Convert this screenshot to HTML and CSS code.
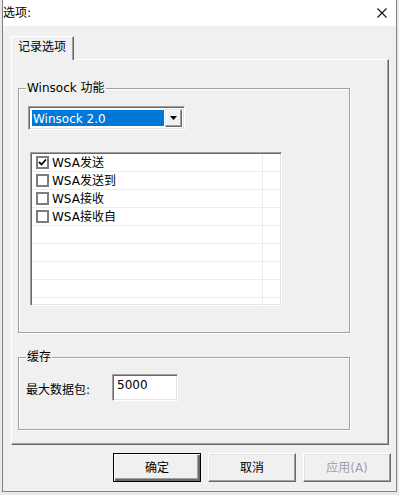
FILE: index.html
```html
<!DOCTYPE html>
<html lang="zh-CN">
<head>
    <meta charset="UTF-8">
    <title>选项</title>
    <link rel="stylesheet" href="styles.css">
</head>
<body>
    <div class="window">
        <div class="titlebar">
            <span class="title">选项:</span>
            <svg class="close" width="10" height="10" viewBox="0 0 10 10">
                <path d="M0.5 0.5 L9.5 9.5 M9.5 0.5 L0.5 9.5" stroke="#111" stroke-width="1.1" fill="none"/>
            </svg>
        </div>
        <div class="client">
            <div class="tabs">
                <div class="tab">记录选项</div>
            </div>
            <div class="panel">
                <fieldset class="group group-winsock">
                    <legend>Winsock 功能</legend>
                    <div class="combo">
                        <div class="combo-value">Winsock 2.0</div>
                        <div class="combo-btn">
                            <svg width="7" height="4" viewBox="0 0 7 4"><path d="M0 0 H7 L3.5 4 Z" fill="#000"/></svg>
                        </div>
                    </div>
                    <div class="list">
                        <div class="row"><div class="cell"><span class="check checked"><svg width="9" height="9" viewBox="0 0 9 9"><path d="M1 4 L3.5 6.5 L8 1.5" stroke="#000" stroke-width="1.8" fill="none"/></svg></span>WSA发送</div><div class="cell"></div></div>
                        <div class="row"><div class="cell"><span class="check"></span>WSA发送到</div><div class="cell"></div></div>
                        <div class="row"><div class="cell"><span class="check"></span>WSA接收</div><div class="cell"></div></div>
                        <div class="row"><div class="cell"><span class="check"></span>WSA接收自</div><div class="cell"></div></div>
                        <div class="row"><div class="cell"></div><div class="cell"></div></div>
                        <div class="row"><div class="cell"></div><div class="cell"></div></div>
                        <div class="row"><div class="cell"></div><div class="cell"></div></div>
                        <div class="row"><div class="cell"></div><div class="cell"></div></div>
                        <div class="row"><div class="cell"></div><div class="cell"></div></div>
                    </div>
                </fieldset>
                <fieldset class="group group-cache">
                    <legend>缓存</legend>
                    <div class="field">
                        <label>最大数据包:</label>
                        <div class="input">5000</div>
                    </div>
                </fieldset>
            </div>
            <div class="buttons">
                <div class="btn default">确定</div>
                <div class="btn">取消</div>
                <div class="btn disabled">应用(A)</div>
            </div>
        </div>
    </div>
</body>
</html>
```

FILE: styles.css
```css
body {
    margin: 0;
    background: #e9e9ec;
    font-family: "DejaVu Sans", "Noto Sans CJK SC", sans-serif;
    font-size: 12px;
    color: #000;
}
.window {
    margin-left: 2px;
    width: 395px;
    height: 492px;
    box-sizing: border-box;
    border: 1px solid #838383;
    border-top: none;
    background: #f0f0f0;
}
.titlebar {
    height: 26px;
    background: #fff;
    display: flex;
    align-items: center;
    justify-content: space-between;
    padding-right: 9px;
}
.title {
    line-height: 14px;
}
.client {
    padding: 10px 0 0 8px;
}
.tabs {
    display: flex;
    position: relative;
    z-index: 1;
}
.tab {
    width: 63px;
    height: 24px;
    box-sizing: border-box;
    border-left: 1px solid #fff;
    border-top: 1px solid #fff;
    border-right: 1px solid #696969;
    box-shadow: inset -1px 0 0 #a0a0a0;
    padding: 3px 0 0 6px;
    line-height: 14px;
    background: #f0f0f0;
}
.panel {
    width: 378px;
    height: 386px;
    box-sizing: border-box;
    margin-top: -1px;
    border: 1px solid;
    border-color: #fff #696969 #696969 #fff;
    box-shadow: inset -1px -1px 0 #a0a0a0;
    padding: 21px 0 0 6px;
}
.group {
    margin: 0;
    padding: 0;
    width: 332px;
    box-sizing: border-box;
    border: 1px solid #a0a0a0;
    box-shadow: 1px 1px 0 #fff, inset 1px 1px 0 #fff;
    min-inline-size: 0;
}
.group legend {
    padding: 0 1px;
    margin-left: 7px;
    line-height: 14px;
    background: #f0f0f0;
}
.group-cache {
    margin-top: 17px;
    height: 80px;
}
.combo {
    margin: 11px 0 0 9px;
    width: 157px;
    height: 24px;
    box-sizing: border-box;
    border: 1px solid;
    border-color: #a0a0a0 #fff #fff #a0a0a0;
    box-shadow: inset 1px 1px 0 #696969, inset -1px -1px 0 #e3e3e3;
    padding: 2px 2px 2px 2px;
    display: flex;
    background: #fff;
}
.combo-value {
    flex: 1;
    margin: 1px 1px 1px 1px;
    background: #0078d7;
    color: #fff;
    line-height: 18px;
    padding-left: 1px;
}
.combo-btn {
    width: 17px;
    box-sizing: border-box;
    background: #f0f0f0;
    border: 1px solid;
    border-color: #e3e3e3 #696969 #696969 #e3e3e3;
    box-shadow: inset -1px -1px 0 #a0a0a0, inset 1px 1px 0 #fff;
    display: flex;
    align-items: center;
    justify-content: center;
}
.list {
    margin: 22px 0 26px 11px;
    width: 252px;
    height: 154px;
    box-sizing: border-box;
    border: 1px solid;
    border-color: #a0a0a0 #fff #fff #a0a0a0;
    box-shadow: inset 1px 1px 0 #696969, inset -1px -1px 0 #e3e3e3;
    padding: 1px 1px 0 1px;
    background: #fff;
    overflow: hidden;
}
.row {
    display: grid;
    grid-template-columns: 231px 1fr;
    height: 18px;
    box-sizing: border-box;
    border-bottom: 1px solid #ececec;
}
.cell {
    display: flex;
    align-items: center;
    line-height: 14px;
}
.cell:first-child {
    border-right: 1px solid #ececec;
    padding-left: 4px;
}
.check {
    width: 13px;
    height: 13px;
    box-sizing: border-box;
    border: 2px solid #7d7d7d;
    background: #fff;
    margin-right: 3px;
    display: flex;
    align-items: center;
    justify-content: center;
}
.field {
    display: flex;
    align-items: center;
    margin: 10px 0 0 7px;
}
.field label {
    width: 86px;
    margin-top: 1px;
}
.input {
    width: 66px;
    height: 27px;
    box-sizing: border-box;
    border: 1px solid;
    border-color: #a0a0a0 #fff #fff #a0a0a0;
    box-shadow: inset 1px 1px 0 #696969, inset -1px -1px 0 #e3e3e3;
    background: #fff;
    padding: 3px 0 0 4px;
    line-height: 14px;
}
.buttons {
    display: flex;
    justify-content: flex-end;
    gap: 7px;
    margin-top: 8px;
    padding-right: 5px;
}
.btn {
    width: 88px;
    height: 29px;
    box-sizing: border-box;
    border: 1px solid;
    border-color: #fff #696969 #696969 #fff;
    box-shadow: inset -1px -1px 0 #a0a0a0, inset 1px 1px 0 #e3e3e3;
    display: flex;
    align-items: center;
    justify-content: center;
    line-height: 14px;
}
.btn.default {
    border: 1px solid #000;
    box-shadow: inset 1px 1px 0 #fff, inset -2px -2px 0 #696969, inset -3px -3px 0 #a0a0a0;
}
.btn.disabled {
    color: #a0a0a0;
}
```
